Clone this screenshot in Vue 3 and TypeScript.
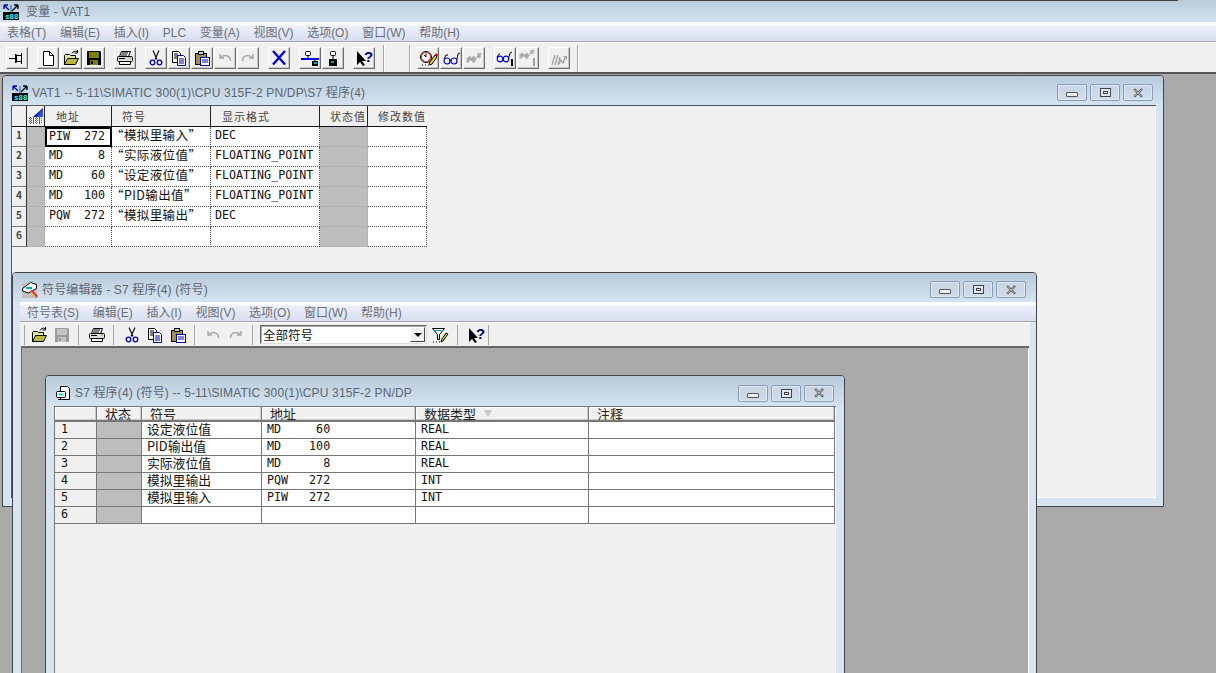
<script setup lang="ts">
const S = 'fill="none" stroke="#000"'
const icons: Record<string, string> = {
  app: '<rect y="8" width="16" height="8" fill="#000"/><path d="M1 1l5 5M1 1h4M1 1v4" fill="none" stroke="#00a" stroke-width="1.4"/><path d="M15 1l-6 6M15 1h-4M15 1v4" fill="none" stroke="#000" stroke-width="1.4"/><path d="M8 1v7" stroke="#06c"/><text x="2" y="15.2" font-size="7.5" font-weight="700" font-family="Liberation Mono" fill="#3ff">s88</text>',
  pin: `<path d="M0 8.5h6M6.500 4v9M7 5.500h5M7 11.500h5M12.500 3v11" ${S}/><path d="M7 4.500h1v8H7z"/>`,
  new: `<path d="M3.500 1.500h6l4 4v10h-10z" fill="#fff" stroke="#000"/><path d="M9.500 1.500v4h4" ${S}/>`,
  open: `<path d="M1.500 14.500v-9l1-1h4l1 1h5v3" fill="#e8e890" stroke="#000"/><path d="M1.500 14.500l3-6h11l-3 6z" fill="#b8b840" stroke="#000"/><path d="M9 3.500c1-2 3-3 5-2M14.500 0v3h-3" ${S}/>`,
  save: '<path d="M1 1h13l1 1v13H1z" fill="#000"/><rect x="3" y="2" width="10" height="6" fill="#808000"/><rect x="4" y="10" width="8" height="5" fill="#808000"/><rect x="5" y="11" width="2" height="3" fill="#000"/>',
  saveOff: '<path d="M1 1h13l1 1v13H1z" fill="#9a9a9a"/><rect x="3" y="2" width="10" height="6" fill="#c4c4c4"/><rect x="4" y="10" width="8" height="5" fill="#c4c4c4"/><rect x="5" y="11" width="2" height="3" fill="#9a9a9a"/>',
  print: `<path d="M4.500 1.500h9l-2 5h-9z" fill="#fff" stroke="#000"/><path d="M5 3h6M4 5h6" stroke="#000"/><rect x=".5" y="6.500" width="15" height="5" rx="1" fill="#ddd" stroke="#000"/><path d="M2.500 11.500h11v3h-11z" fill="#fff" stroke="#000"/><path d="M2 8.500h6" stroke="#000"/><path d="M12 8h2" stroke="#aa0"/>`,
  cut: '<path d="M5 .5l4 9M11 .5L7 9.500" fill="none" stroke="#000" stroke-width="1.1"/><circle cx="4.500" cy="12.500" r="2.300" fill="none" stroke="#00a" stroke-width="1.3"/><circle cx="11.500" cy="12.500" r="2.300" fill="none" stroke="#00a" stroke-width="1.3"/>',
  copy: '<path d="M1.500 1.500h6l2 2v9h-8z" fill="#fff" stroke="#000"/><path d="M3 4h4M3 6h4M3 8h3" stroke="#000"/><path d="M6.500 5.500h6l2 2v8h-8z" fill="#fff" stroke="#00a"/><path d="M8 9h5M8 11h5M8 13h5" stroke="#00a"/>',
  paste: '<rect x="1.500" y="3.500" width="11" height="11" fill="#a09050" stroke="#000"/><rect x="4.500" y="1.500" width="5" height="3" fill="#ccc" stroke="#000"/><rect x="6.500" y="7.500" width="9" height="8" fill="#fff" stroke="#00a"/><path d="M8 10h6M8 12h6" stroke="#00a"/>',
  undo: '<path d="M3 4v4h4M3.500 8c3-4 10-3 10 3" fill="none" stroke="#a8a8a8" stroke-width="1.500"/>',
  redo: '<path d="M13 4v4H9M12.500 8c-3-4-10-3-10 3" fill="none" stroke="#a8a8a8" stroke-width="1.500"/>',
  del: '<path d="M2 1l12 13.500M14 1L2 14.500" stroke="#0000e0" stroke-width="2.300"/>',
  net: `<rect x="3.500" y="1.500" width="5" height="4" rx="1" fill="#fff" stroke="#000"/><path d="M6 6v3" stroke="#000"/><rect x="-1" y="8" width="18" height="2" fill="#0000e0"/><rect x="10" y="11" width="6" height="5" fill="#000"/><rect x="12" y="12" width="3" height="2" fill="#0aa"/><path d="M13 10v1" stroke="#000"/>`,
  node: '<rect x="5.500" y="1.500" width="5" height="4" rx="1" fill="#fff" stroke="#000"/><path d="M8 6v4" stroke="#000"/><rect x="4" y="9" width="8" height="7" fill="#000"/><rect x="6" y="11" width="3" height="2" fill="#0aa"/>',
  help: '<path d="M1 1v14l3-3 3 4 2-1-3-4h4z" fill="#000"/><text x="8" y="12" font-size="15" font-weight="700" font-family="Liberation Sans" fill="#000080">?</text>',
  watch: '<circle cx="6" cy="7" r="5.500" fill="#fff" stroke="#000"/><circle cx="6" cy="7" r="4.500" fill="none" stroke="#c33"/><path d="M6 3.500V7l-2-2" fill="none" stroke="#000"/><path d="M2 15h1M5 15h1M8 15h1" stroke="#000"/><path d="M9 13l1 2 2-1 5-7-2-2z" fill="#e8d020" stroke="#000"/><path d="M15 5l2 2 1-2-2-2z" fill="#c00"/>',
  glasses: '<circle cx="4" cy="11" r="3" fill="none" stroke="#0000e0" stroke-width="1.200"/><circle cx="11" cy="11" r="3" fill="none" stroke="#0000e0" stroke-width="1.200"/><path d="M7 10h1M1 9l2-4h2M14 9l1-5 2-1" fill="none" stroke="#000"/>',
  zig: '<path d="M1 8v5l4-3 3 3 3-6 3 1 1-5-4 1 1 1-2 4-2-3-3 2-1-2z" fill="#a8a8a8" stroke="#bbb"/>',
  glassesBar: '<circle cx="3" cy="9" r="2.800" fill="none" stroke="#0000e0" stroke-width="1.200"/><circle cx="9" cy="9" r="2.800" fill="none" stroke="#0000e0" stroke-width="1.200"/><path d="M0 7l2-3h1M12 7l1-4 2-1" fill="none" stroke="#000"/><rect x="14" y="9" width="2" height="7" fill="#000"/>',
  zigBar: '<path d="M0 4v5l4-3 3 3 3-6 3 1 1-4-4 1 1 1-2 4-2-3-3 2-1-2z" fill="#a8a8a8" stroke="#bbb"/><rect x="13" y="8" width="2" height="8" fill="#a0a0a0"/>',
  multi: '<path d="M1 15l3-10M4 15l3-10M7 15l2-8" stroke="#a0a0a0" stroke-width="1.300"/><path d="M8 14l2-4 2 3 2-5" fill="none" stroke="#a0a0a0" stroke-width="1.300"/><path d="M12 6h4v4z" fill="#a0a0a0"/>',
  sym: '<rect y="1" width="15" height="15" fill="#c0c0c0"/><path d="M.5 6.500l8-6 6 2v4l-8 4.500-6-2z" fill="#fff" stroke="#000"/><rect x="4" y="5" width="6" height="2" fill="#0aa"/><path d="M8 9l6 7 2-2-6-6z" fill="#e02020"/><path d="M9 9.500l5.500 6" stroke="#e8d020"/>',
  doc: '<path d="M5.500 1.500h7l2 2v11h-9z" fill="#fff" stroke="#000"/><rect x="1.500" y="6.500" width="9" height="6" rx="1" fill="#fff" stroke="#000"/><rect x="3.500" y="8.500" width="5" height="2" fill="#2cc"/><path d="M3 14.500h8" stroke="#000"/>',
  grid: '<path d="M14 0v9H4z" fill="#0000b0"/><path d="M14 0L7 9h7z" fill="#3050d0"/><rect y="9" width="14" height="7" fill="#fff"/><path d="M0 10.500h14M0 12.500h14M0 14.500h14M1.500 9v7M4.500 9v7M7.500 9v7M10.500 9v7" stroke="#555" stroke-dasharray="1 1"/>',
  filter: '<path d="M.5 1.500h12l-5 6v5h-2v-5z" fill="#fff" stroke="#000"/><path d="M2 3.500h9" stroke="#0aa"/><path d="M10 12l-1 3 2-1 5-7-2-1z" fill="#e8d020" stroke="#000"/><path d="M1 15h1M4 15h1M7 15h1" stroke="#000"/>',
}

const mainMenu = ['表格(T)', '编辑(E)', '插入(I)', 'PLC', '变量(A)', '视图(V)', '选项(O)', '窗口(W)', '帮助(H)']
const symMenu = ['符号表(S)', '编辑(E)', '插入(I)', '视图(V)', '选项(O)', '窗口(W)', '帮助(H)']

const mainGroups: string[][] = [
  ['pin'], ['new', 'open', 'save'], ['print'], ['cut', 'copy', 'paste', 'undo', 'redo'],
  ['del'], ['net', 'node'], ['help'],
]
const watchGroups: string[][] = [['watch', 'glasses', 'zig'], ['glassesBar', 'zigBar'], ['multi']]

const symTools: string[][] = [['open', 'saveOff'], ['print'], ['cut', 'copy', 'paste'], ['undo', 'redo']]

const vatHead = ['', '', '地址', '符号', '显示格式', '状态值', '修改数值']
const vatRows = [
  ['PIW  272', '“模拟里输入”', 'DEC'],
  ['MD     8', '“实际液位值”', 'FLOATING_POINT'],
  ['MD    60', '“设定液位值”', 'FLOATING_POINT'],
  ['MD   100', '“PID输出值”', 'FLOATING_POINT'],
  ['PQW  272', '“模拟里输出”', 'DEC'],
  ['', '', ''],
]

const symHead = ['', '状态', '符号', '地址', '数据类型', '注释']
const symRows = [
  ['设定液位值', 'MD     60', 'REAL'],
  ['PID输出值', 'MD    100', 'REAL'],
  ['实际液位值', 'MD      8', 'REAL'],
  ['模拟里输出', 'PQW   272', 'INT'],
  ['模拟里输入', 'PIW   272', 'INT'],
  ['', '', ''],
]
</script>

<template>
  <div class="app">
    <div class="titlebar">
      <svg class="ico" viewBox="0 0 16 16" v-html="icons.app"></svg>
      <span class="title-text main-title">变量 - VAT1</span>
    </div>
    <div class="menubar main-menu">
      <span v-for="m in mainMenu" :key="m">{{ m }}</span>
    </div>
    <div class="toolbar main-tools">
      <div v-for="(g, i) in mainGroups" :key="i" class="tgroup">
        <button v-for="n in g" :key="n" class="tbtn" type="button">
          <svg class="ico" viewBox="0 0 16 16" v-html="icons[n]"></svg>
        </button>
      </div>
      <i class="bar first-bar"></i>
      <i class="bar second-bar"></i>
      <div v-for="(g, i) in watchGroups" :key="'w' + i" class="tgroup">
        <button v-for="n in g" :key="n" class="tbtn" type="button">
          <svg class="ico" viewBox="0 0 16 16" v-html="icons[n]"></svg>
        </button>
      </div>
      <i class="bar last-bar"></i>
    </div>

    <div class="workspace">
      <section class="win win-vat">
        <header class="win-head">
          <svg class="ico" viewBox="0 0 16 16" v-html="icons.app"></svg>
          <span class="title-text">VAT1 -- 5-11\SIMATIC 300(1)\CPU 315F-2 PN/DP\S7 程序(4)</span>
          <div class="win-btns">
            <span class="wb"><i class="g-min"></i></span>
            <span class="wb"><i class="g-max"></i></span>
            <span class="wb"><i class="g-close">✕</i></span>
          </div>
        </header>
        <div class="client vat-client">
          <div class="vat-grid">
            <div v-for="(h, i) in vatHead" :key="'h' + i" class="vh" :class="'vh' + i">
              <svg v-if="i === 1" class="ico" viewBox="0 0 16 16" v-html="icons.grid"></svg>
              <template v-else>{{ h }}</template>
            </div>
            <template v-for="(r, ri) in vatRows" :key="ri">
              <div class="vc rownum">{{ ri + 1 }}</div>
              <div class="vc shade"></div>
              <div class="vc mono" :class="{ focus: ri === 0 }">{{ r[0] }}</div>
              <div class="vc sym">{{ r[1] }}</div>
              <div class="vc mono">{{ r[2] }}</div>
              <div class="vc shade"></div>
              <div class="vc"></div>
            </template>
          </div>
        </div>
      </section>

      <section class="win win-sym">
        <header class="win-head">
          <svg class="ico" viewBox="0 0 16 16" v-html="icons.sym"></svg>
          <span class="title-text">符号编辑器 - S7 程序(4) (符号)</span>
          <div class="win-btns">
            <span class="wb"><i class="g-min"></i></span>
            <span class="wb"><i class="g-max"></i></span>
            <span class="wb"><i class="g-close">✕</i></span>
          </div>
        </header>
        <div class="menubar sym-menu">
          <span v-for="m in symMenu" :key="m">{{ m }}</span>
        </div>
        <div class="toolbar sym-tools">
          <i class="sep"></i>
          <template v-for="(g, i) in symTools" :key="i">
            <span v-for="n in g" :key="n" class="flat">
              <svg class="ico" viewBox="0 0 16 16" v-html="icons[n]"></svg>
            </span>
            <i class="sep"></i>
          </template>
          <div class="combo">
            <span>全部符号</span>
            <b class="combo-arrow"><i></i></b>
          </div>
          <span class="flat filter">
            <svg class="ico" viewBox="0 0 16 16" v-html="icons.filter"></svg>
          </span>
          <i class="sep after-filter"></i>
          <span class="flat">
            <svg class="ico" viewBox="0 0 16 16" v-html="icons.help"></svg>
          </span>
          <i class="sep end-sep"></i>
        </div>
        <div class="client mdi">
          <section class="win win-table">
            <header class="win-head">
              <svg class="ico" viewBox="0 0 16 16" v-html="icons.doc"></svg>
              <span class="title-text">S7 程序(4) (符号) -- 5-11\SIMATIC 300(1)\CPU 315F-2 PN/DP</span>
              <div class="win-btns">
                <span class="wb"><i class="g-min"></i></span>
                <span class="wb"><i class="g-max"></i></span>
                <span class="wb"><i class="g-close">✕</i></span>
              </div>
            </header>
            <div class="client table-client">
              <div class="sym-grid">
                <div v-for="(h, i) in symHead" :key="'s' + i" class="sh" :class="'sh' + i">
                  {{ h }}<i v-if="i === 4" class="sort"></i>
                </div>
                <template v-for="(r, ri) in symRows" :key="ri">
                  <div class="sc snum">{{ ri + 1 }}</div>
                  <div class="sc shade"></div>
                  <div class="sc sname">{{ r[0] }}</div>
                  <div class="sc mono">{{ r[1] }}</div>
                  <div class="sc mono">{{ r[2] }}</div>
                  <div class="sc"></div>
                </template>
              </div>
            </div>
          </section>
        </div>
      </section>
    </div>
  </div>
</template>

<style>
html, body { margin: 0; overflow: hidden; background: #aaa; }
</style>

<style scoped>
.app {
  width: 1216px;
  height: 673px;
  display: flex;
  flex-direction: column;
  overflow: hidden;
  font: 12px/16px "Liberation Sans", "Noto Sans CJK SC", sans-serif;
  color: #666;
}
.ico { width: 16px; height: 16px; display: block; flex: none; overflow: visible; }
.titlebar {
  position: relative;
  height: 22px;
  flex: none;
  display: flex;
  align-items: center;
  padding: 1px 0 0 3px;
  box-sizing: border-box;
  background: linear-gradient(#b8cadb, #d4e3f1);
}
.titlebar::before {
  content: "";
  position: absolute;
  left: 0;
  top: 0;
  width: 1178px;
  height: 1px;
  background: #444;
}
.title-text { color: #5c6670; font-size: 12px; white-space: nowrap; letter-spacing: .15px; }
.main-title { margin-left: 7px; }

.menubar {
  display: flex;
  gap: 13.7px;
  align-items: center;
  height: 20px;
  box-sizing: border-box;
  padding-top: 3px;
  flex: none;
  color: #6c6f78;
  white-space: nowrap;
  background: linear-gradient(#fff 0, #fff 2px, #eceff8 4px, #d9dff0 100%);
  border-bottom: 1px solid #a0a4ae;
}
.main-menu { padding-left: 7px; }

.toolbar { display: flex; flex: none; background: #f0f0f0; border-top: 1px solid #fff; }
.main-tools { height: 30px; box-sizing: border-box; padding: 4px 0 0 6px; }
.tgroup { display: flex; gap: 1px; margin-right: 9px; }
.tgroup:nth-of-type(7) { margin-right: 0; }
.tbtn {
  width: 22px;
  height: 22px;
  padding: 0;
  display: flex;
  align-items: center;
  justify-content: center;
  background: #f0f0f0;
  border: 1px solid;
  border-color: #fff #6e6e6e #6e6e6e #fff;
  box-shadow: inset -1px -1px 0 #c8c8c8;
}
.bar { display: block; width: 1px; height: 28px; margin-top: -2px; background: #a8a8a8; box-shadow: 1px 0 0 #fff; }
.first-bar { margin-left: 8px; }
.second-bar { margin: -2px 7px 0 25px; }
.last-bar { margin-left: -1px; }
.main-tools .tgroup:nth-of-type(10) { margin-right: 8px; }

.workspace {
  position: relative;
  flex: 1;
  background: #aaa;
  border-top: 2px solid #555;
  overflow: hidden;
}
.win {
  --pr: 7px;
  --head: 29px;
  position: absolute;
  box-sizing: border-box;
  background: #d7e4f2;
  border: 1px solid #444;
  border-radius: 4px 4px 0 0;
  display: flex;
  flex-direction: column;
  padding: 0 var(--pr) 0 8px;
}
.win-vat { left: 2px; top: 1px; width: 1162px; height: 432px; padding-bottom: 8px; }
.win-sym { left: 12px; top: 198px; width: 1025px; height: 470px; }
.win-table { --pr: 8px; --head: 30px; left: 23px; top: 27px; width: 800px; height: 400px; }

.win-head {
  margin: 0 calc(-1 * var(--pr)) 0 -8px;
  padding: 4px 10px 0 9px;
  height: var(--head);
  box-sizing: border-box;
  flex: none;
  display: flex;
  align-items: center;
  gap: 4px;
  background: linear-gradient(#b8cadb, #d4e3f1);
  border-radius: 3px 3px 0 0;
}
.win-btns { margin-left: auto; display: flex; gap: 3px; }
.wb {
  width: 30px;
  height: 17px;
  box-sizing: border-box;
  border: 1px solid #8a9db8;
  border-radius: 2px;
  background: linear-gradient(#c6d4e4, #d0deec);
  display: flex;
  align-items: center;
  justify-content: center;
  box-shadow: inset 0 0 0 1px #dfe8f2;
}
.g-min { display: block; width: 10px; height: 3px; margin-top: 4px; background: #eee; border: 1px solid #555; border-radius: 1px; }
.g-max { display: block; width: 9px; height: 7px; background: #dde4ee; border: 1px solid #444; box-shadow: inset 0 0 0 2px #dde4ee, inset 0 0 0 3px #444; }
.g-close { font: 700 14px/14px "DejaVu Sans", sans-serif; color: #fff; -webkit-text-stroke: .7px #444; }

.client { background: #f0f0f0; box-sizing: border-box; flex: 1; min-height: 0; }
.vat-client { border-top: 1px solid #555; border-left: 1px solid #555; box-shadow: inset -1px -1px 0 #fff; margin-left: 0; }

.vat-grid {
  display: grid;
  grid-template-columns: 15px 18px 67px 99px 109px 48px 59px;
  grid-template-rows: 21px repeat(6, 20px);
  width: 415px;
  color: #111;
}
.vh {
  box-sizing: border-box;
  background: #f0f0f0;
  border-right: 1px solid #222;
  border-bottom: 1px solid #111;
  font: 11px/20px "Noto Sans CJK SC", sans-serif;
  color: #444;
  letter-spacing: 1px;
  white-space: nowrap;
  overflow: hidden;
}
.vh1 { padding: 2px 0 0 2px; }
.vh2 { padding-left: 11px; }
.vh3 { padding-left: 10px; }
.vh4 { padding-left: 11px; }
.vh5 { padding-left: 10px; }
.vh6 { padding-left: 10px; border-right: 0; }
.vc {
  box-sizing: border-box;
  background: #fff;
  border-right: 1px dotted #555;
  border-bottom: 1px dotted #555;
  font-size: 13px;
  line-height: 17px;
  padding-left: 4px;
  white-space: pre;
}
.mono { font: 11.67px/16px "DejaVu Sans Mono", "Noto Sans CJK SC", monospace; color: #111; }
.vc.sym { font: 12.5px/15px "Noto Sans CJK SC", sans-serif; padding-left: 5px; letter-spacing: .4px; text-indent: -6px; }
.rownum {
  background: #f0f0f0;
  padding: 0;
  text-align: center;
  font: 700 10px/15px "Noto Sans CJK SC", sans-serif;
  color: #444;
  border-right: 1px solid #333;
  border-bottom: 1px solid #777;
  box-shadow: inset 1px 1px 0 #fff;
}
.shade { background: #bdbdbd; border-color: #aaa; }
.focus { box-shadow: inset 0 0 0 2px #000; border: 0; background: #fff; padding-top: 1px; line-height: 16px; }

.sym-menu { margin: 0 -7px 0 -1px; padding-left: 7px; height: 20px; }
.sym-tools { height: 23px; margin: 0 -1px 0 -1px; align-items: center; border-top: 1px solid #fff; padding-left: 4px; }
.sep { display: block; width: 1px; height: 20px; margin: 0 6px 0 5px; background: #a8a8a8; flex: none; }
.sym-tools > .sep:first-child { margin-left: 0; margin-right: 2px; }
.flat { width: 23px; height: 22px; display: flex; align-items: center; justify-content: center; flex: none; }
.combo {
  width: 167px;
  height: 19px;
  margin-left: 1px;
  flex: none;
  box-sizing: border-box;
  display: flex;
  align-items: center;
  justify-content: space-between;
  background: #fff;
  border: 1px solid;
  border-color: #666 #ddd #ddd #666;
  box-shadow: inset 1px 1px 0 #aaa;
  padding-left: 2px;
  font: 12.5px/16px "Noto Sans CJK SC", sans-serif;
  color: #111;
}
.combo-arrow {
  width: 15px;
  height: 15px;
  margin-right: 1px;
  display: flex;
  align-items: center;
  justify-content: center;
  background: #f0f0f0;
  border: 1px solid;
  box-sizing: border-box;
  border-color: #fff #444 #444 #fff;
}
.combo-arrow i { width: 0; height: 0; border: 4px solid transparent; border-top-color: #000; border-bottom: 0; }
.filter { margin-left: 1px; }
.after-filter { margin-left: 6px; }
.end-sep { margin-left: 1px; }

.mdi { position: relative; background: #aaa; border-top: 2px solid #666; border-left: 1px solid #666; box-shadow: inset -1px 0 0 #fff; }

.table-client { border-left: 1px solid #777; border-top: 1px solid #777; box-shadow: inset -1px 0 0 #fff; }
.sym-grid {
  display: grid;
  grid-template-columns: 42px 45px 120px 154px 173px 246px;
  grid-template-rows: 15px repeat(6, 17px);
  width: 780px;
  color: #111;
}
.sh {
  box-sizing: border-box;
  background: #f0f0f0;
  border-right: 1px solid #777;
  border-bottom: 2px solid #777;
  box-shadow: inset -1px -1px 0 #ccc, inset 1px 1px 0 #fff;
  font: 13px/13px "Noto Sans CJK SC", sans-serif;
  color: #222;
  white-space: nowrap;
  overflow: hidden;
  padding-left: 8px;
}
.sort {
  display: inline-block;
  width: 0;
  height: 0;
  margin-left: 8px;
  border-left: 4px solid transparent;
  border-right: 4px solid transparent;
  border-top: 7px solid #c8c8c8;
  vertical-align: 2px;
}
.sc {
  box-sizing: border-box;
  background: #fff;
  border-right: 1px solid #777;
  border-bottom: 1px solid #777;
  padding-left: 5px;
  white-space: pre;
}
.sc.mono { line-height: 15px; }
.snum { background: #f0f0f0; font: 11.67px/15px "DejaVu Sans Mono", monospace; padding-left: 6px; }
.sname { font: 12.8px/14px "Noto Sans CJK SC", sans-serif; padding-left: 5px; }
.sc.shade { background: #bdbdbd; border-color: #777; }
</style>
